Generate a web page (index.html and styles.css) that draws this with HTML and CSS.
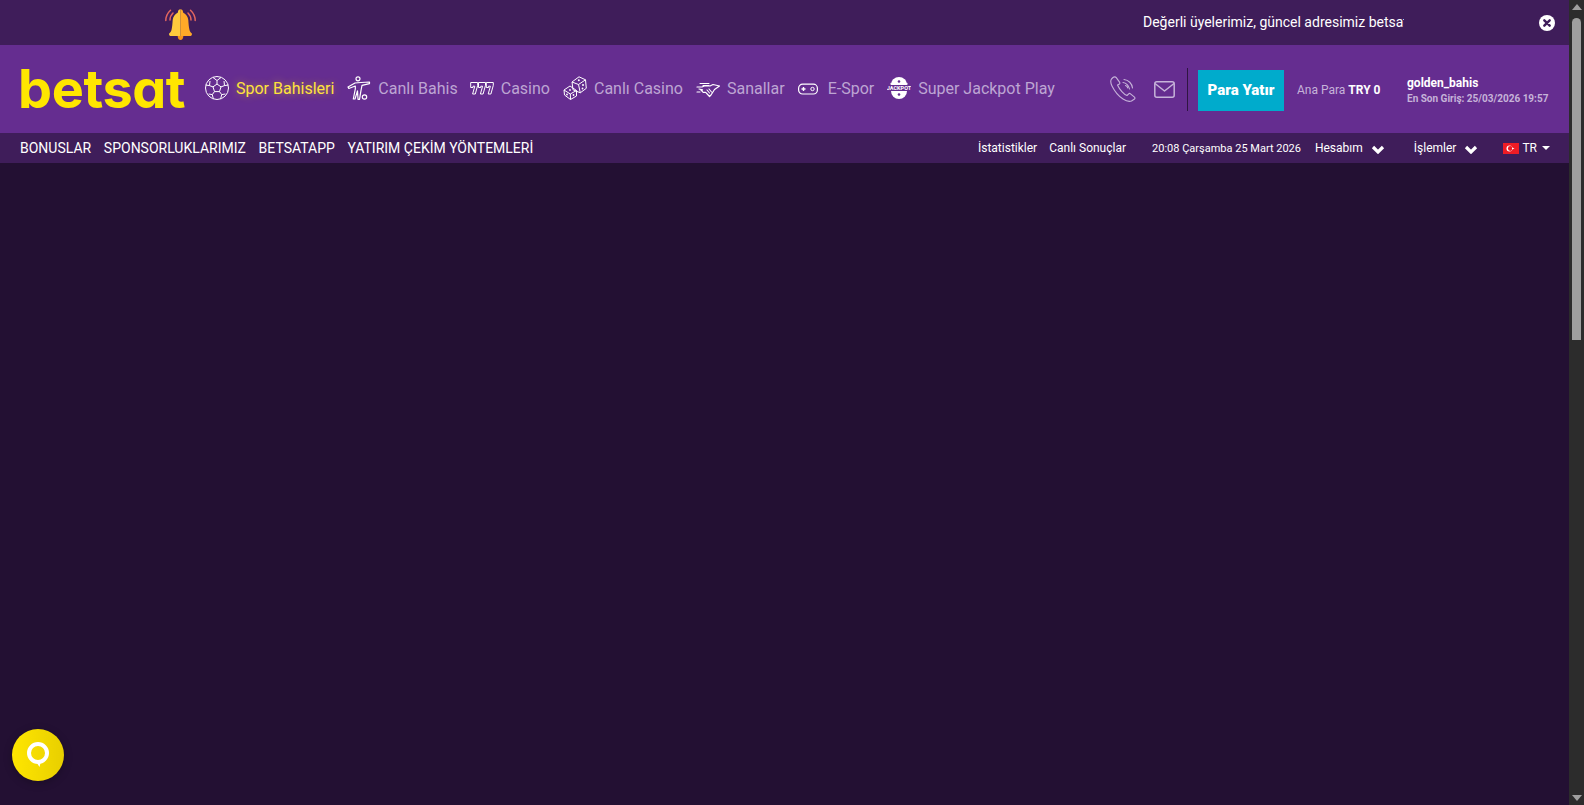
FILE: index.html
```html
<!DOCTYPE html>
<html lang="tr">
<head>
<meta charset="utf-8">
<title>betsat</title>
<link rel="stylesheet" href="styles.css">
</head>
<body>
<div class="viewport">
  <div class="page">
    <div class="notice">
      <svg class="bell" viewBox="0 0 31 32" aria-hidden="true">
        <g fill="none" stroke="#e2665f" stroke-width="1.500" stroke-linecap="round">
          <path d="M8 4C6 6 5 8.500 5 11"/><path d="M5.500 1.200C2.500 4 .8 7.500.8 11.500"/>
          <path d="M23 4C25 6 26 8.500 26 11"/><path d="M25.500 1.200C28.500 4 30.200 7.500 30.200 11.500"/>
        </g>
        <path d="M15.500 .3c-1.500 0-2.500 1-2.600 3.200C9.800 5 8 8 7.700 11c-.2 3.500-.5 7-1.200 10-.4 1.500-1.300 2.500-2.200 3.300-.5.500-.3 2.700 1 2.700h10.200z" fill="#ffcb3d"/>
        <path d="M15.500 .3c1.500 0 2.500 1 2.600 3.200C21.200 5 23 8 23.300 11c.2 3.500.5 7 1.200 10 .4 1.500 1.300 2.500 2.200 3.300.5.500.3 2.700-1 2.700H15.500z" fill="#ffa928"/>
        <path d="M12.700 27h5.600c0 2.400-1.200 4-2.800 4s-2.800-1.600-2.800-4z" fill="#f79219"/>
      </svg>
      <div class="ticker"><span>Değerli üyelerimiz, güncel adresimiz betsat1215.com'dur.</span></div>
      <svg class="close" viewBox="0 0 16 16" aria-hidden="true">
        <circle cx="8" cy="8" r="8" fill="#fff"/>
        <path d="M5.300 5.300l5.400 5.400M10.700 5.300l-5.400 5.400" stroke="#3f1d5a" stroke-width="2.400" stroke-linecap="round"/>
      </svg>
    </div>

    <header class="mainbar">
      <div class="logo">betsat</div>
      <nav class="games">
        <a class="game active">
          <svg class="gi" viewBox="0 0 24 24"><g fill="none" stroke="#fff" stroke-width="1"><circle cx="12" cy="12" r="11.500"/><path d="M12 8l4 2.900-1.500 4.700h-5L8 10.900z"/><path d="M12 8V4.500M16 10.900l3.500-1.300M14.500 15.600l2.200 3M9.500 15.600l-2.200 3M8 10.900L4.500 9.600"/><path d="M8 1.500L12 4.500 16 1.500M19.500 9.600l3.800-.6M19.500 9.600L19 5M16.700 18.600l3.600-.6M16.700 18.600l-1 4.300M7.300 18.600l-3.600-.6M7.300 18.600l1 4.300M4.500 9.600L.7 9M4.500 9.600L5 5"/></g></svg>
          <span>Spor Bahisleri</span>
        </a>
        <a class="game tight">
          <svg class="gi" viewBox="0 0 24 24"><g fill="none" stroke="#fff" stroke-width="1.200" stroke-linejoin="round" stroke-linecap="round"><circle cx="11" cy="2.800" r="2"/><path d="M1 11l7-4 6-.5 8.500-.5v1.600L15 9.300l-1 5-1.500 9H11l-.5-8.500L8 23H6.300l2-10V10l-6.500 2.500z"/><circle cx="17.500" cy="21" r="2.200"/></g></svg>
          <span>Canlı Bahis</span>
        </a>
        <a class="game">
          <svg class="gi" viewBox="0 0 24 24"><g fill="none" stroke="#fff" stroke-width="1" stroke-linejoin="round"><path d="M.7 6.500h7v2.800L5.300 18H2.600l2.200-7.800H3v1.300H.7z"/><path d="M8.500 6.500h7v2.800L13.100 18h-2.700l2.200-7.800h-1.800v1.300H8.500z"/><path d="M16.300 6.500h7v2.800L20.900 18h-2.700l2.200-7.800h-1.800v1.300h-2.300z"/></g></svg>
          <span>Casino</span>
        </a>
        <a class="game">
          <svg class="gi" viewBox="0 0 24 24"><g fill="none" stroke="#fff" stroke-width="1" stroke-linejoin="round"><path d="M16 .8l6.500 3 .8 8.500-6 4.500-7.300-3L9 6z"/><path d="M15.500 8.500l7-4.700M15.500 8.500L9 6M15.500 8.500l1.800 8.300"/><path d="M7 10l6.500 4.500 0 5.500-6 3.500-6-4.500L1 14z"/><path d="M7.300 18L13.500 14.500M7.300 18l.2 5.500M7.300 18L1 14"/></g><g fill="#fff"><circle cx="15.800" cy="4.300" r="1"/><circle cx="20" cy="9" r="1"/><circle cx="19.500" cy="12.500" r=".9"/><circle cx="4" cy="18.500" r=".9"/><circle cx="10.500" cy="19" r=".9"/><circle cx="7" cy="14" r=".9"/></g></svg>
          <span>Canlı Casino</span>
        </a>
        <a class="game">
          <svg class="gi" viewBox="0 0 24 24"><g fill="none" stroke="#fff" stroke-linejoin="round" stroke-linecap="round"><path d="M4 7.500h9M7 9.500h6M1 16h3" stroke-width="1.100"/><path d="M1 11h5l3-1.200 5 .2 3-1.500 6.500 1.500-5 3.500-3.500 5.500-1.500 1.500-1.800-2-2-2.200h-2.500l-2.700-2.800 2 .3L3 13" stroke-width="1.200"/><path d="M11 14l2.500 3M13 13l2.500 3" stroke-width="1.100"/></g></svg>
          <span>Sanallar</span>
        </a>
        <a class="game espor">
          <svg class="gi short" viewBox="0 0 20 12"><rect x=".6" y="1.200" width="18.800" height="9.800" rx="4" fill="none" stroke="#fff" stroke-width="1.200"/><path d="M5.500 4v4M3.500 6h4" stroke="#fff" stroke-width="1.400"/><circle cx="14.500" cy="6" r="1.700" fill="none" stroke="#fff"/></svg>
          <span>E-Spor</span>
        </a>
        <a class="game jackpot">
          <svg class="gi jack" viewBox="0 0 24 24"><path d="M4 9a8 8 0 0 1 16 0z" fill="#fff"/><path d="M4 15a8 8 0 0 0 16 0z" fill="#fff"/><path d="M12 2v20M6 4l12 16M18 4L6 20M3.500 7.500l17 9M20.500 7.500l-17 9" stroke="#fff" stroke-width="1.500" stroke-dasharray="1.600 99" fill="none"/><circle cx="12" cy="5.500" r="1.300" fill="#652d90"/><circle cx="12" cy="18.500" r="1.300" fill="#652d90"/><text x="12" y="14.200" text-anchor="middle" class="jacktext">JACKPOT</text></svg>
          <span>Super Jackpot Play</span>
        </a>
      </nav>
      <div class="account">
        <svg class="phone" viewBox="0 0 26 26"><g fill="none" stroke="#c6b3d9" stroke-width="1.100" stroke-linecap="round" stroke-linejoin="round"><path d="M3 1.500L1.500 3C.5 4.500.5 7 2 10c2.500 5 7 10.500 11 13 3 2 6 3 8.500 2l3-2c.6-.6.500-1.300 0-1.800l-4-3.400c-.6-.5-1.300-.5-1.800 0l-1.700 1.700c-3-1-7.500-6-9.500-10.500L9.500 8c.4-.5.500-1 .2-1.600L6.300 1.600C5.500.6 4 .6 3 1.500z"/><path d="M13 6.500c3 .3 6 3 6.500 6.500M14 3.500c4.500.5 8 4 8.500 8.500M15.500 9.500c1.200.3 2 1.200 2.200 2.400"/></g></svg>
        <svg class="mail" viewBox="0 0 21 17"><g fill="none" stroke="#c6b3d9" stroke-width="1.500" stroke-linejoin="round"><rect x=".8" y=".8" width="19.400" height="15.400" rx="2"/><path d="M1 2.500l9.500 7.500L20 2.500"/></g></svg>
        <span class="divider"></span>
        <a class="deposit">Para Yatır</a>
        <div class="balance">Ana Para <b>TRY 0</b></div>
        <div class="user">
          <div class="uname">golden_bahis</div>
          <div class="lastlogin">En Son Giriş: 25/03/2026 19:57</div>
        </div>
      </div>
    </header>

    <div class="subbar">
      <nav class="sublinks">
        <a>BONUSLAR</a><a>SPONSORLUKLARIMIZ</a><a>BETSATAPP</a><a>YATIRIM ÇEKİM YÖNTEMLERİ</a>
      </nav>
      <div class="subright">
        <a>İstatistikler</a>
        <a>Canlı Sonuçlar</a>
        <span class="clock">20:08 Çarşamba 25 Mart 2026</span>
        <a class="menu acc">Hesabım <svg class="chev" viewBox="0 0 14 9"><path d="M2 2l5 5 5-5" fill="none" stroke="#fff" stroke-width="3.200"/></svg></a>
        <a class="menu ops">İşlemler <svg class="chev" viewBox="0 0 14 9"><path d="M2 2l5 5 5-5" fill="none" stroke="#fff" stroke-width="3.200"/></svg></a>
        <a class="lang">
          <svg class="flag" viewBox="0 0 16 11"><rect width="16" height="11" fill="#ee1c25"/><circle cx="6.500" cy="5.500" r="3" fill="#fff"/><circle cx="7.300" cy="5.500" r="2.400" fill="#ee1c25"/><path d="M9 4.500l2.500 1L9 6.500z" fill="#fff"/></svg>
          TR <i class="caret"></i>
        </a>
      </div>
    </div>
    <main class="content"></main>
  </div>
  <div class="scrollbar">
    <i class="arrow up"></i>
    <div class="track"><div class="thumb"></div></div>
    <i class="arrow down"></i>
  </div>
</div>
<button class="chat" aria-label="Canlı destek">
  <svg viewBox="0 0 24 26"><circle cx="12" cy="11" r="9" fill="none" stroke="#fff" stroke-width="4"/><path d="M9 18l4.500 7 1.500-6z" fill="#fff"/></svg>
</button>
</body>
</html>
```
FILE: styles.css
```css
* { box-sizing: border-box; }
html, body { margin: 0; height: 100%; overflow: hidden; }
body { font-family: Roboto, "Liberation Sans", sans-serif; background: #231033; color: #fff; }
a { color: inherit; text-decoration: none; }

.viewport { display: flex; height: 805px; }
.page { flex: 1; min-width: 0; display: flex; flex-direction: column; }

.notice { height: 45px; flex: none; background: #3f1d5a; display: flex; align-items: center; padding: 0 14px 0 165px; }
.bell { width: 31px; height: 32px; margin-top: 4px; }
.ticker { width: 261px; margin-left: auto; margin-right: 135px; margin-bottom: 2px; overflow: hidden; white-space: nowrap; font-size: 14px; font-weight: 400; }
.close { width: 16px; height: 16px; margin-top: 1px; }

.mainbar { height: 88px; flex: none; background: #652d90; display: flex; align-items: center; padding: 0 20px; }
.logo { width: 165px; margin-left: -2px; margin-right: 2px; font-family: Inter, sans-serif; font-feature-settings: "cv11"; font-size: 54px; font-weight: 700; line-height: 1; letter-spacing: -.4px; color: #ffe600; white-space: nowrap; }
.games { display: flex; align-items: center; gap: 13px; margin-left: 20px; margin-bottom: 2px; font-size: 16px; color: #bda5d3; }
.game { display: flex; align-items: center; gap: 7px; white-space: nowrap; }
.game.active { color: #ffe23c; text-shadow: 0 0 8px rgba(255, 230, 0, .45); }
.game.tight { margin-right: -1px; }
.gi { width: 24px; height: 24px; flex: none; }
.gi.short { width: 20px; height: 12px; margin-top: 2px; }
.espor { gap: 10px; }
.jacktext { font-family: Roboto, sans-serif; font-size: 5.500px; font-weight: 700; fill: #fff; }
.account { display: flex; align-items: center; margin-left: auto; margin-top: 2px; }
.phone { width: 26px; height: 26px; margin-bottom: 2px; }
.mail { width: 21px; height: 17px; margin-left: 18px; margin-bottom: 2px; }
.divider { width: 1px; height: 43px; background: #2f1542; margin-left: 12px; margin-top: -2px; }
.deposit { width: 86px; height: 41px; margin-left: 10px; background: #00abcc; display: flex; align-items: center; justify-content: center; font-size: 15px; font-weight: 900; }
.balance { margin-left: 13px; font-size: 12px; color: #c6b3d9; width: 110px; }
.balance b { color: #fff; font-weight: 700; }
.user { width: 142px; }
.uname { font-size: 12px; font-weight: 700; }
.lastlogin { font-size: 10px; font-weight: 700; color: #c6b3d9; margin-top: 3px; white-space: nowrap; }

.subbar { height: 30px; flex: none; background: #3f1d5a; display: flex; align-items: center; justify-content: space-between; padding: 0 19px 0 20px; }
.sublinks { display: flex; gap: 12.700px; font-size: 14px; font-weight: 400; }
.subright { display: flex; align-items: center; font-size: 12px; }
.subright > a:nth-child(2) { margin-left: 12px; }
.clock { margin-left: 26px; font-size: 11px; }
.menu { display: flex; align-items: center; gap: 8px; }
.acc { margin-left: 14px; }
.ops { margin-left: 29px; }
.chev { width: 14px; height: 9px; margin-top: 2px; }
.lang { margin-left: 25px; display: flex; align-items: center; gap: 3px; }
.flag { width: 16px; height: 11px; }
.caret { width: 0; height: 0; margin-left: 2px; border: 4px solid transparent; border-top-color: #fff; border-bottom: 0; }

.content { flex: 1; background: #231033; }

.scrollbar { width: 15px; flex: none; background: #2c2c2c; display: flex; flex-direction: column; align-items: center; }
.arrow { width: 0; height: 0; flex: none; border-left: 5px solid transparent; border-right: 5px solid transparent; }
.arrow.up { border-bottom: 6px solid #9f9f9f; margin: 4px 0; }
.arrow.down { border-top: 6px solid #9f9f9f; margin: 4px 0; }
.track { flex: 1; width: 100%; display: flex; justify-content: center; margin-top: 4px; }
.thumb { width: 9px; height: 322px; background: #9f9f9f; border-radius: 4.500px 4.500px 0 0; }

.chat { position: fixed; left: 12px; top: 729px; width: 52px; height: 52px; border: 0; padding: 0; border-radius: 50%; background: linear-gradient(90deg, #ffe600, #e8cf00); display: flex; align-items: center; justify-content: center; box-shadow: 0 2px 8px rgba(0,0,0,.25); }
.chat svg { width: 24px; height: 26px; }
```
